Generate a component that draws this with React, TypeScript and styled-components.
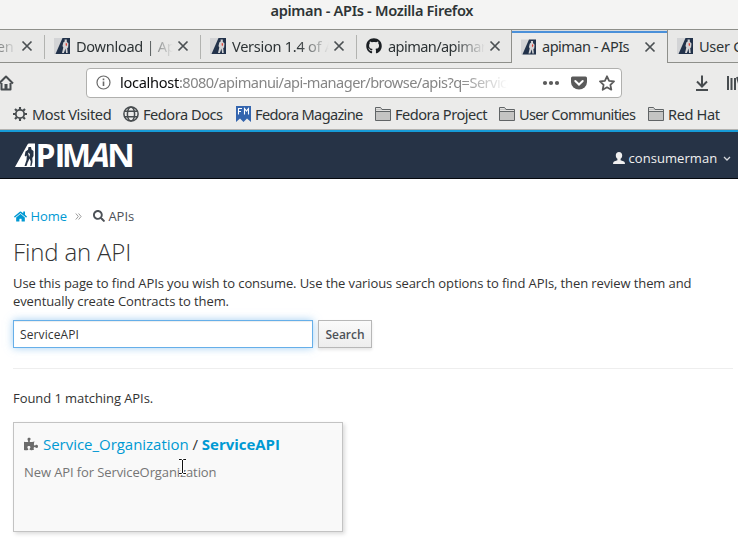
import React from "react";
import styled, { createGlobalStyle } from "styled-components";
import { FaHome, FaSearch, FaPuzzlePiece, FaGithub } from "react-icons/fa";

const Global = createGlobalStyle`
  * { box-sizing: border-box; }
  html, body { margin: 0; padding: 0; background: #fff; }
  body { width: 738px; height: 553px; overflow: hidden; font-family: "Open Sans", sans-serif; font-size: 13px; color: #333; }
`;

const Screen = styled.div`
  position: relative;
  width: 738px;
  height: 553px;
  overflow: hidden;
`;

const Chrome = styled.div`
  height: 130px;
  background: #e8e8e7;
  border-bottom: 1px solid #b3b3b1;
  font-family: "Noto Sans", sans-serif;
  font-size: 14.6px;
  color: #2e3436;
  white-space: nowrap;
`;

const TitleBar = styled.div`
  height: 30px;
  padding: 0 0 9px 6px;
  background: #f4f4f3;
  border-bottom: 1px solid #8e8f8a;
  display: flex;
  align-items: center;
  justify-content: center;
  font-weight: 600;
`;

const Fit = styled.span<{ $w: number; $s?: number }>`
  display: inline-block;
  width: ${(p) => p.$w}px;
  letter-spacing: ${(p) => p.$s ?? 0}px;
  white-space: nowrap;
`;

const TabStrip = styled.div`
  display: flex;
  height: 33px;
  margin-left: -111px;
  width: 960px;
`;

const Tab = styled.div<{ $active?: boolean; $next?: boolean; $w?: number }>`
  display: flex;
  align-items: center;
  width: ${(p) => p.$w ?? 156}px;
  height: 33px;
  padding: 0 11px 0 9px;
  flex: none;
  background: ${(p) =>
    p.$active
      ? "#ebebea"
      : p.$next
        ? "linear-gradient(#8e8f8a, #8e8f8a) right / 1px 100% no-repeat"
        : "linear-gradient(#b2b3b0, #b2b3b0) right 5px / 1px 24px no-repeat"};
  border-bottom: ${(p) => (p.$active ? "0" : "1px solid #8e8f8a")};
  border-right: ${(p) => (p.$active ? "1px solid #8e8f8a" : "0")};
  box-shadow: ${(p) => (p.$active ? "inset 0 1px #d9dcdf, inset 0 3px #4a90d9" : "none")};
`;

const TabTitle = styled.div<{ $fade?: boolean; $s?: number }>`
  margin-left: 6px;
  padding-bottom: 1px;
  width: ${(p) => (p.$fade ? 97 : 98)}px;
  flex: none;
  overflow: hidden;
  letter-spacing: ${(p) => p.$s ?? -0.3}px;
  mask-image: ${(p) => (p.$fade ? "linear-gradient(to right, #000 66px, transparent 97px)" : "none")};
`;

const TabClose = styled.svg`
  width: 12px;
  height: 12px;
  margin-left: 4px;
  flex: none;
`;

const NavBar = styled.div`
  display: flex;
  align-items: center;
  height: 40px;
  background: #ebebea;
`;

const HomeIcon = styled.svg`
  width: 16px;
  height: 16px;
  margin-left: -2px;
  flex: none;
`;

const UrlBox = styled.div`
  display: flex;
  align-items: center;
  width: 536px;
  height: 30px;
  margin-left: 72px;
  padding: 0 6px 1px 9px;
  background: #fff;
  border: 1px solid #b0b0ae;
  border-radius: 4px;
  flex: none;
`;

const UrlText = styled.div`
  width: 388px;
  margin-left: 9px;
  margin-right: 34px;
  padding-bottom: 1px;
  overflow: hidden;
  letter-spacing: -0.55px;
  color: #868686;
  flex: none;
  mask-image: linear-gradient(to right, #000 340px, transparent 388px);
  b { font-weight: 400; color: #0c0c0d; letter-spacing: -0.3px; }
`;

const UrlIcons = styled.div`
  display: flex;
  align-items: center;
  gap: 11px;
`;

const Tools = styled.div`
  display: flex;
  gap: 16px;
  margin-left: 72px;
`;

const Bookmarks = styled.div`
  display: flex;
  align-items: center;
  height: 26px;
  padding: 0 0 1px 12px;
  background: #ebebea;
`;

const Bookmark = styled.div<{ $w: number; $s: number }>`
  display: flex;
  align-items: center;
  gap: 4px;
  width: ${(p) => p.$w}px;
  height: 20px;
  margin-top: -3px;
  flex: none;
  letter-spacing: ${(p) => p.$s}px;
  svg { flex: none; }
`;

const Header = styled.header`
  display: flex;
  justify-content: space-between;
  height: 49px;
  padding: 11px 7px 0 15px;
  background: #263346;
  border-top: 2px solid #169bd7;
  border-bottom: 1px solid #05080d;
`;

const UserMenu = styled.div`
  display: flex;
  align-items: center;
  height: 30px;
  color: #f0f0f0;
`;

const Content = styled.main`
  padding: 28px 5px 0 13px;
`;

const Crumbs = styled.nav`
  display: flex;
  align-items: center;
  height: 18px;
  padding-left: 1px;
  color: #4d5258;
`;

const Link = styled.a<{ $bold?: boolean }>`
  color: #0099d3;
  font-weight: ${(p) => (p.$bold ? 700 : 400)};
  text-decoration: none;
`;

const Heading = styled.h1`
  margin: 10px 0 0;
  font-size: 24px;
  line-height: 34px;
  font-weight: 300;
  letter-spacing: -0.15px;
`;

const Intro = styled.p`
  margin: 5px 0 0;
  line-height: 18px;
  letter-spacing: -0.1px;
`;

const SearchRow = styled.div`
  display: flex;
  gap: 5px;
  margin-top: 10px;
`;

const SearchInput = styled.input`
  width: 300px;
  height: 28px;
  padding: 1px 6px 0;
  border: 1px solid #66afe9;
  outline: 0;
  box-shadow: inset 0 1px 1px rgba(0, 0, 0, 0.075), 0 0 8px rgba(102, 175, 233, 0.6);
  font: 12px "Open Sans", sans-serif;
  letter-spacing: 0.12px;
  color: #333;
`;

const SearchButton = styled.button`
  width: 54px;
  height: 28px;
  padding: 0;
  border: 1px solid #b7b7b7;
  background: linear-gradient(#fafafa, #ededed);
  box-shadow: 0 2px 3px rgba(0, 0, 0, 0.1);
  font: 600 12px "Open Sans", sans-serif;
  color: #4d5258;
`;

const Divider = styled.hr`
  height: 1px;
  margin: 20px 0;
  border: 0;
  background: #eee;
`;

const Found = styled.div`
  line-height: 18px;
  letter-spacing: -0.07px;
`;

const Card = styled.section`
  position: relative;
  width: 330px;
  height: 110px;
  margin-top: 15px;
  padding: 10px;
  background: #f9f9f9;
  border: 1px solid #c3c3c3;
  box-shadow: 2px 2px 4px rgba(0, 0, 0, 0.14);
`;

const CardTitle = styled.div`
  display: flex;
  align-items: center;
  height: 22px;
  font-size: 15px;
  letter-spacing: -0.03px;
  white-space: pre;
  svg { margin-right: 5px; }
`;

const CardText = styled.div`
  margin-top: 8px;
  line-height: 18px;
  letter-spacing: -0.1px;
  color: #757575;
`;

const Cursor = styled.svg`
  position: absolute;
  left: 164px;
  top: 34px;
`;

const Favicon = () => (
  <svg width="16" height="16" viewBox="0 0 16 16">
    <path d="M0 0h16v16H0z" fill="#d3d4d6" />
    <path d="M8.500 0H16v16H1.500z" fill="#22324a" />
    <path d="M10.500 1.500h2.300v2.200l1.700 1.800-.4 4-.9.500.5 5h-1.600l-.6-4.500-1.600 4.500H8l1.300-5.500-.8-1.500.8-3.500 1.500-1.200z" fill="#d4d4d6" />
    <path d="M11.800 4.800l1.400 1-.6 2.500-1-1z" fill="#df4336" />
  </svg>
);

const Close = () => (
  <TabClose viewBox="0 0 12 12">
    <path d="M1.500 1.500l9 9m0-9l-9 9" stroke="#4b5053" strokeWidth="1.700" />
  </TabClose>
);

const Folder = () => (
  <svg width="16" height="16" viewBox="0 0 16 16">
    <path d="M.5 14.500v-13h5l1.500 2h8.500v11z" fill="#c4c4c3" stroke="#606466" />
    <path d="M1 5.500h14" stroke="#606466" />
    <path d="M1 4.500h14M1 2.500h4.500" stroke="#e0e0df" />
  </svg>
);

const Gear = () => (
  <svg width="16" height="16" viewBox="0 0 16 16" stroke="#474c4f" fill="none">
    <circle cx="8" cy="8" r="4.200" strokeWidth="1.800" />
    <path
      d="M8 1v2.400M8 12.600V15M1 8h2.400M12.600 8H15M3 3l1.800 1.800M11.200 11.200L13 13M13 3l-1.800 1.800M4.800 11.200L3 13"
      strokeWidth="2.100"
    />
  </svg>
);

const Globe = () => (
  <svg width="16" height="16" viewBox="0 0 16 16" stroke="#474c4f" fill="none" strokeWidth="1.500">
    <circle cx="8" cy="8" r="7.100" />
    <ellipse cx="8" cy="8" rx="3.600" ry="7.100" />
    <path d="M1.500 5.300h13M1.500 10.700h13" />
  </svg>
);

const Magazine = () => (
  <svg width="16" height="16" viewBox="0 0 16 16">
    <path d="M1 0h15v16l-4-3.500L8.500 16 5 12.500 1 16z" fill="#3465ae" />
    <path d="M3.500 8.500v-6h3.500M3.500 5.500h2.500M9.500 8.500v-6l2 2.500 2-2.500v6" stroke="#fff" strokeWidth="1.100" fill="none" />
  </svg>
);

const Logo = () => (
  <svg width="120" height="26" viewBox="0 0 120 26" fill="#fff" fontFamily="Open Sans, sans-serif" fontWeight="700" fontSize="33">
    <path d="M0 24L12.500 1.500Q13 .5 14 .5h6V24z" />
    <path
      d="M13.500 4h2.500l.5 2.500 2 1.500v5l-1.200 2 .2 4-1 4h-1.200l.5-4.500-1.300-3-1.500 3.500-1.500 4H9.500l2-6 .3-4.500-1.300 1-.8-1 .8-4 2.500-1.800z"
      fill="#263346"
    />
    <path d="M13 9.500l2 1.500-.8 3zM12.500 20l1-1.500v3z" />
    <text x="20.500" y="24" textLength="20" lengthAdjust="spacingAndGlyphs">P</text>
    <text x="39.500" y="24" textLength="11" lengthAdjust="spacingAndGlyphs">I</text>
    <text x="47" y="24" textLength="29" lengthAdjust="spacingAndGlyphs">M</text>
    <text transform="translate(72 24) skewX(-13)" textLength="21" lengthAdjust="spacingAndGlyphs">A</text>
    <text x="92" y="24" textLength="28" lengthAdjust="spacingAndGlyphs">N</text>
  </svg>
);

const tabs = ["Download | Apiman", "Version 1.4 of Apiman"];

const bookmarks = [
  { label: "Most Visited", icon: <Gear />, width: 111, spacing: -0.38 },
  { label: "Fedora Docs", icon: <Globe />, width: 112, spacing: -0.48 },
  { label: "Fedora Magazine", icon: <Magazine />, width: 140, spacing: -0.68 },
  { label: "Fedora Project", icon: <Folder />, width: 124, spacing: -0.5 },
  { label: "User Communities", icon: <Folder />, width: 149, spacing: -0.68 },
  { label: "Red Hat", icon: <Folder />, width: 90, spacing: -0.4 },
];

export default function App() {
  return (
    <Screen>
      <Global />
      <Chrome>
        <TitleBar>
          <Fit $w={203} $s={-0.32}>apiman - APIs - Mozilla Firefox</Fit>
        </TitleBar>
        <TabStrip>
          <Tab>
            <Favicon />
            <TabTitle $fade>apiman: Open</TabTitle>
            <Close />
          </Tab>
          {tabs.map((title) => (
            <Tab key={title}>
              <Favicon />
              <TabTitle $fade>{title}</TabTitle>
              <Close />
            </Tab>
          ))}
          <Tab $next $w={155}>
            <FaGithub size={16} color="#1b1f23" />
            <TabTitle $fade $s={-0.6}>apiman/apiman: API</TabTitle>
            <Close />
          </Tab>
          <Tab $active>
            <Favicon />
            <TabTitle $s={-0.55}>apiman - APIs</TabTitle>
            <Close />
          </Tab>
          <Tab>
            <Favicon />
            <TabTitle>User Guide</TabTitle>
          </Tab>
        </TabStrip>
        <NavBar>
          <HomeIcon viewBox="0 0 16 16">
            <path d="M1 8.500L8 1.500l7 7M3.500 8v6.500h9V8" fill="none" stroke="#474c4f" strokeWidth="2" strokeLinejoin="round" />
            <path d="M6.500 9h3v6h-3z" fill="#474c4f" />
          </HomeIcon>
          <UrlBox>
            <svg width="15" height="15" viewBox="0 0 15 15">
              <circle cx="7.500" cy="7.500" r="6.500" fill="none" stroke="#696969" strokeWidth="1.200" />
              <path d="M7.500 6.500V11M7.500 3.500v1.700" stroke="#696969" strokeWidth="1.600" />
            </svg>
            <UrlText>
              <b>localhost</b>:8080/apimanui/api-manager/browse/apis?q=ServiceAPI
            </UrlText>
            <UrlIcons>
              <svg width="18" height="16" viewBox="0 0 18 16" fill="#5a5a5a">
                <circle cx="3" cy="8" r="2.100" />
                <circle cx="9" cy="8" r="2.100" />
                <circle cx="15" cy="8" r="2.100" />
              </svg>
              <svg width="16" height="16" viewBox="0 0 16 16">
                <path d="M1.500 1.500h13Q16 1.500 16 3v4a8 7.500 0 0 1-16 0V3Q0 1.500 1.500 1.500z" fill="#5a5a5a" />
                <path d="M4.300 6L8 9.500 11.700 6" fill="none" stroke="#fff" strokeWidth="2" strokeLinecap="round" />
              </svg>
              <svg width="17" height="16" viewBox="-1 0 17 16">
                <path
                  d="M8 1.300l2.100 4.500 4.900.6-3.600 3.400.9 4.900L8 12.300l-4.300 2.400.9-4.900L1 6.400l4.900-.6z"
                  fill="none"
                  stroke="#5a5a5a"
                  strokeWidth="1.800"
                  strokeLinejoin="round"
                />
              </svg>
            </UrlIcons>
          </UrlBox>
          <Tools>
            <svg width="16" height="16" viewBox="0 0 16 16" fill="none" stroke="#474c4f" strokeWidth="2">
              <path d="M8 .5V11M3 6.500l5 5 5-5M2 15h12" />
            </svg>
            <svg width="16" height="16" viewBox="0 0 16 16" fill="none" stroke="#474c4f" strokeWidth="2">
              <path d="M2 1v14M5.500 3v12M9 3v12M11 2l4 13" />
            </svg>
          </Tools>
        </NavBar>
        <Bookmarks>
          {bookmarks.map((b) => (
            <Bookmark key={b.label} $w={b.width} $s={b.spacing}>
              {b.icon}
              {b.label}
            </Bookmark>
          ))}
        </Bookmarks>
      </Chrome>
      <Header>
        <Logo />
        <UserMenu>
          <svg width="12" height="12" viewBox="0 0 12 12">
            <path d="M6 0c2 0 3.200 1.300 3.200 3.200 0 1.600-.7 3-1.600 3.600v1.400L11 9.500q1 .5 1 2.500H0q0-2 1-2.500l3.400-1.300V6.800C3.500 6.200 2.800 4.800 2.800 3.200 2.800 1.300 4 0 6 0z" fill="#f0f0f0" />
          </svg>
          <Fit $w={98} $s={0.07}>&nbsp;consumerman</Fit>
          <svg width="8" height="6" viewBox="0 0 8 6">
            <path d="M1 2l3 3 3-3" fill="none" stroke="#d5d8dc" strokeWidth="1.300" />
          </svg>
        </UserMenu>
      </Header>
      <Content>
        <Crumbs>
          <FaHome size={13} color="#0099d3" />
          <Fit $w={48}>
            <Link>&nbsp;Home</Link>
          </Fit>
          <svg width="7" height="7" viewBox="0 0 7 7">
            <path d="M.8.5l2.500 3-2.500 3M3.600.5l2.500 3-2.500 3" fill="none" stroke="#9c9c9c" />
          </svg>
          <Fit $w={11}>&nbsp;</Fit>
          <FaSearch size={12} color="#4d5258" />
          &nbsp;APIs
        </Crumbs>
        <Heading>Find an API</Heading>
        <Intro>
          Use this page to find APIs you wish to consume. Use the various search options to find APIs, then review them and
          eventually create Contracts to them.
        </Intro>
        <SearchRow>
          <SearchInput defaultValue="ServiceAPI" />
          <SearchButton>Search</SearchButton>
        </SearchRow>
        <Divider />
        <Found>Found 1 matching APIs.</Found>
        <Card>
          <CardTitle>
            <FaPuzzlePiece size={14} color="#6b6b6b" />
            <Link>Service_Organization</Link> / <Link $bold>ServiceAPI</Link>
          </CardTitle>
          <CardText>New API for ServiceOrganization</CardText>
          <Cursor width="9" height="19" viewBox="0 0 9 19">
            <path d="M1 2.500h2.500l1 1 1-1H8M4.500 3v13M1 16.500h2.500l1-1 1 1H8" fill="none" stroke="#fff" strokeWidth="3" />
            <path d="M1 2.500h2.500l1 1 1-1H8M4.500 3v13M1 16.500h2.500l1-1 1 1H8" fill="none" stroke="#111" />
          </Cursor>
        </Card>
      </Content>
    </Screen>
  );
}
